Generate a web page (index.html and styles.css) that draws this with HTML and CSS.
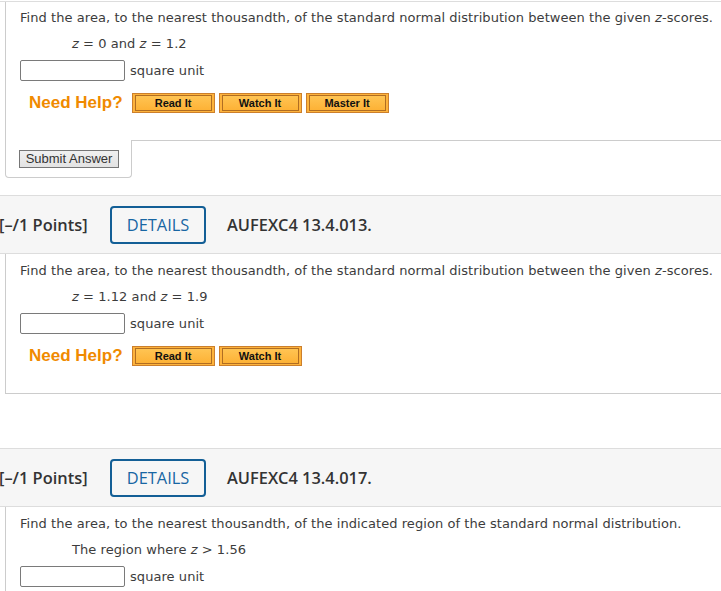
FILE: index.html
```html
<!DOCTYPE html>
<html>
<head>
<meta charset="utf-8">
<link rel="stylesheet" href="styles.css">
</head>
<body>
<div class="page">
  <div class="toprule"></div>

  <div class="question">
    <div class="qbody first">
      <p class="prompt">Find the area, to the nearest thousandth, of the standard normal distribution between the given <i>z</i>-scores.</p>
      <p class="given"><i>z</i> = 0 and <i>z</i> = 1.2</p>
      <div class="answer"><span class="field"></span><span class="unit">square unit</span></div>
      <div class="help">
        <span class="help-label">Need Help?</span>
        <span class="hbtn"><span class="hbtn-in">Read It</span></span>
        <span class="hbtn"><span class="hbtn-in">Watch It</span></span>
        <span class="hbtn"><span class="hbtn-in">Master It</span></span>
      </div>
    </div>
    <div class="footer">
      <div class="submit-tab"><span class="submit">Submit Answer</span></div>
      <div class="footer-rest"></div>
    </div>
  </div>

  <div class="qhead">
    <span class="points">[–/1 Points]</span>
    <span class="details">DETAILS</span>
    <span class="code">AUFEXC4 13.4.013.</span>
  </div>
  <div class="question boxed">
    <div class="qbody">
      <p class="prompt">Find the area, to the nearest thousandth, of the standard normal distribution between the given <i>z</i>-scores.</p>
      <p class="given"><i>z</i> = 1.12 and <i>z</i> = 1.9</p>
      <div class="answer"><span class="field"></span><span class="unit">square unit</span></div>
      <div class="help">
        <span class="help-label">Need Help?</span>
        <span class="hbtn"><span class="hbtn-in">Read It</span></span>
        <span class="hbtn"><span class="hbtn-in">Watch It</span></span>
      </div>
    </div>
  </div>

  <div class="qhead third">
    <span class="points">[–/1 Points]</span>
    <span class="details">DETAILS</span>
    <span class="code">AUFEXC4 13.4.017.</span>
  </div>
  <div class="question">
    <div class="qbody">
      <p class="prompt">Find the area, to the nearest thousandth, of the indicated region of the standard normal distribution.</p>
      <p class="given">The region where <i>z</i> &gt; 1.56</p>
      <div class="answer"><span class="field"></span><span class="unit">square unit</span></div>
    </div>
  </div>
</div>
</body>
</html>
```

FILE: styles.css
```css
html, body {
  margin: 0;
  padding: 0;
  background: #ffffff;
}
.page {
  width: 721px;
  overflow: hidden;
}
.toprule {
  margin-top: 1px;
  border-top: 1px solid #dddddd;
}
.question {
  margin-left: 5px;
}
.qbody {
  border-left: 1px solid #cccccc;
  padding: 8px 0 27px 14px;
  font-family: "DejaVu Sans", Verdana, sans-serif;
  font-size: 13px;
  letter-spacing: 0.06px;
  color: #3c3c3c;
}
.qbody.first {
  padding-top: 7px;
}
.question.boxed .qbody {
  border-bottom: 1px solid #cccccc;
}
.prompt, .given {
  margin: 0;
  line-height: 18px;
  white-space: nowrap;
}
.given {
  margin-top: 8px;
  padding-left: 52px;
}
.answer {
  margin-top: 7px;
  display: flex;
  align-items: center;
  gap: 5px;
}
.field {
  display: block;
  width: 103px;
  height: 19px;
  border: 1px solid #7a7a7a;
  border-radius: 2px;
  background: #ffffff;
}
.unit {
  line-height: 18px;
}
.help {
  margin-top: 12px;
  display: flex;
  align-items: center;
  gap: 4px;
  height: 20px;
}
.help-label {
  font-family: "Liberation Sans", Arial, sans-serif;
  font-weight: bold;
  font-size: 17px;
  line-height: 20px;
  letter-spacing: 0;
  color: #f08a00;
  margin-left: 9px;
  margin-right: 5px;
}
.hbtn {
  display: block;
  width: 81px;
  height: 16px;
  border: 1px solid #cc7f2c;
  padding: 1px 0;
  background: #fdb33c;
  box-sizing: content-box;
}
.hbtn-in {
  display: block;
  margin: 0 2px;
  height: 14px;
  border: 1px solid #b06d22;
  background: linear-gradient(#ffc453, #fdb236);
  font-family: "Liberation Sans", Arial, sans-serif;
  font-weight: bold;
  font-size: 11px;
  line-height: 14px;
  letter-spacing: 0;
  text-align: center;
  color: #111111;
}
.footer {
  display: flex;
}
.submit-tab {
  width: 127px;
  border-left: 1px solid #cccccc;
  border-right: 1px solid #cccccc;
  border-bottom: 1px solid #cccccc;
  border-radius: 0 0 4px 4px;
  padding: 10px 0 8px 13px;
  box-sizing: border-box;
  height: 38px;
}
.footer-rest {
  flex: 1;
  border-top: 1px solid #cccccc;
}
.submit {
  display: block;
  width: 98px;
  height: 16px;
  border: 1px solid #767676;
  background: linear-gradient(#f0f0f0, #e3e3e3);
  font-family: "Liberation Sans", Arial, sans-serif;
  font-size: 13px;
  line-height: 16px;
  color: #333333;
  text-align: center;
}
.qhead {
  margin-top: 17px;
  height: 57px;
  background: #f6f6f6;
  border-top: 1px solid #dddddd;
  border-bottom: 1px solid #dddddd;
  display: flex;
  align-items: center;
  font-family: "Open Sans", sans-serif;
  font-size: 16.4px;
  color: #333333;
}
.qhead.third {
  margin-top: 54px;
}
.points {
  font-weight: 600;
  margin-left: -1px;
  width: 111px;
  flex: none;
}
.details {
  display: block;
  width: 92px;
  height: 34px;
  border: 2px solid #135f96;
  border-radius: 4px;
  color: #1866a3;
  line-height: 34px;
  text-align: center;
  flex: none;
}
.code {
  font-weight: 600;
  margin-left: 21px;
}
```
